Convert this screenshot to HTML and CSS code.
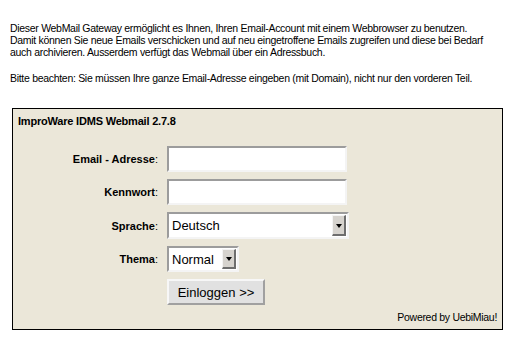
FILE: index.html
```html
<!DOCTYPE html>
<html lang="de">
<head>
    <meta charset="UTF-8">
    <title>ImproWare IDMS Webmail</title>
    <link rel="stylesheet" href="styles.css">
</head>
<body>
    <div class="intro">
        <p>Dieser WebMail Gateway ermöglicht es Ihnen, Ihren Email-Account mit einem Webbrowser zu benutzen.<br>
        Damit können Sie neue Emails verschicken und auf neu eingetroffene Emails zugreifen und diese bei Bedarf<br>
        auch archivieren. Ausserdem verfügt das Webmail über ein Adressbuch.</p>
        <p class="note">Bitte beachten: Sie müssen Ihre ganze Email-Adresse eingeben (mit Domain), nicht nur den vorderen Teil.</p>
    </div>

    <form class="login-box">
        <div class="title">ImproWare IDMS Webmail 2.7.8</div>

        <div class="login-form">
            <label class="label" for="email"><b>Email - Adresse</b>:</label>
            <input class="field" type="text" id="email">

            <label class="label" for="pass"><b>Kennwort</b>:</label>
            <input class="field" type="password" id="pass">

            <label class="label" for="lang"><b>Sprache</b>:</label>
            <span class="select wide">
                <select id="lang">
                    <option>Deutsch</option>
                    <option>English</option>
                </select>
            </span>

            <label class="label" for="theme"><b>Thema</b>:</label>
            <span class="select narrow">
                <select id="theme">
                    <option>Normal</option>
                </select>
            </span>

            <span></span>
            <button type="button" class="submit">Einloggen &gt;&gt;</button>
        </div>

        <div class="powered">Powered by UebiMiau!</div>
    </form>
</body>
</html>
```

FILE: styles.css
```css
/* Page */
body {
    margin: 0;
    background: #fff;
    color: #000;
    font-family: 'Liberation Sans', Arial, sans-serif;
    font-size: 10.5px;
    letter-spacing: -0.3px;
}

.intro {
    padding: 22px 10px 0;
}

.intro p {
    margin: 0;
    line-height: 12px;
    white-space: nowrap;
}

.intro .note {
    margin-top: 14px;
}

/* Login box */
.login-box {
    box-sizing: border-box;
    width: 491px;
    margin: 24px 0 0 12px;
    padding: 6px 5px 6px 5px;
    background: #ebe7d9;
    border: 1px solid #000;
}

.title {
    font-weight: bold;
    font-size: 11px;
    letter-spacing: -0.2px;
    line-height: 12px;
}

.login-form {
    display: grid;
    grid-template-columns: 140px auto;
    column-gap: 9px;
    row-gap: 7px;
    justify-items: start;
    align-items: center;
    margin-top: 19px;
}

.label {
    justify-self: end;
    white-space: nowrap;
    font-size: 11px;
    letter-spacing: 0;
}

.field {
    box-sizing: border-box;
    width: 180px;
    height: 26px;
    margin: 0;
    padding: 2px 4px;
    background: #fff;
    border-style: solid;
    border-width: 2px;
    border-color: #9c9c9c #f4f4f4 #f4f4f4 #9c9c9c;
    font: 13px 'Liberation Sans', Arial, sans-serif;
    letter-spacing: 0;
    outline: none;
}

/* Selects with the old grey arrow button */
.select {
    position: relative;
    display: inline-block;
    box-sizing: border-box;
    height: 26px;
    background: #fff;
    border-style: solid;
    border-width: 2px;
    border-color: #9c9c9c #f4f4f4 #f4f4f4 #9c9c9c;
}

.select.wide {
    width: 182px;
    height: 27px;
}

.select.narrow {
    width: 72px;
}

.select select {
    appearance: none;
    -webkit-appearance: none;
    width: 100%;
    height: 100%;
    margin: 0;
    padding: 0 20px 0 3px;
    border: none;
    background: transparent;
    font: 13px 'Liberation Sans', Arial, sans-serif;
    letter-spacing: 0;
    color: #000;
    outline: none;
}

.select::after {
    content: "";
    position: absolute;
    top: 1px;
    right: 1px;
    bottom: 1px;
    width: 11px;
    background: #d6d3ce;
    border-style: solid;
    border-width: 1px 2px 2px 1px;
    border-color: #f4f4f4 #6e6e6e #6e6e6e #f4f4f4;
    pointer-events: none;
}

.select::before {
    content: "";
    position: absolute;
    right: 5px;
    top: 50%;
    margin-top: -2px;
    border-style: solid;
    border-width: 4px 3.5px 0 3.5px;
    border-color: #000 transparent transparent transparent;
    z-index: 1;
    pointer-events: none;
}

.submit {
    box-sizing: border-box;
    width: 98px;
    height: 26px;
    margin: 0;
    padding: 0;
    background: #e1e1e1;
    border-style: solid;
    border-width: 2px;
    border-color: #f7f7f7 #a0a0a0 #a0a0a0 #f7f7f7;
    font: 13px 'Liberation Sans', Arial, sans-serif;
    letter-spacing: 0;
    color: #000;
}

.powered {
    text-align: right;
    line-height: 12px;
    margin-top: 6px;
}
```
